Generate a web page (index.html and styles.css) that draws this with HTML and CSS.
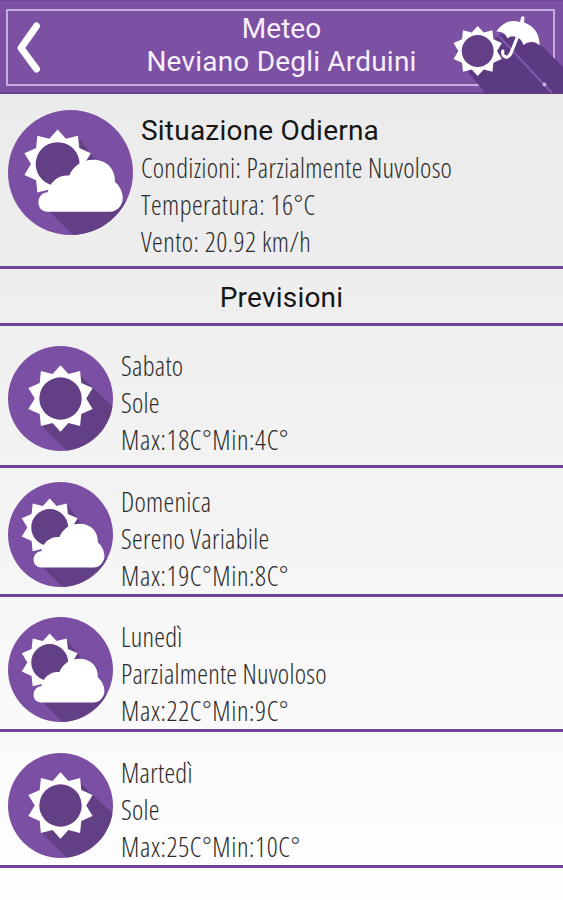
FILE: index.html
```html
<!DOCTYPE html>
<html lang="it">
<head>
<meta charset="utf-8">
<title>Meteo</title>
<link rel="stylesheet" href="styles.css">
</head>
<body>
<svg class="defs" aria-hidden="true">
  <defs>
    <clipPath id="disc"><circle r="52"/></clipPath>
    <g id="sun">
      <polygon class="white" points="0,-33 7.9,-24.3 19.4,-27.2 20.6,-15.4 31.8,-10.4 25.5,0 31.8,10.4 20.6,15.4 19.4,27.2 7.9,24.3 0,33 -7.9,24.3 -19.4,27.2 -20.6,15.4 -31.8,10.4 -25.5,0 -31.8,-10.4 -20.6,-15.4 -19.4,-27.2 -7.9,-24.3"/>
      <circle class="shade" r="21"/>
    </g>
    <g id="sunny">
      <circle class="base" r="52"/>
      <polygon class="shade" clip-path="url(#disc)" points="20,-22 72,27 60,80 35,80 -20,26"/>
      <use href="#sun"/>
    </g>
    <g id="cloudy">
      <circle class="base" r="52"/>
      <g clip-path="url(#disc)">
        <polygon class="shade" points="-20,30 6,56 60,56 60,13 40,28"/>
        <polygon class="shade" points="7,-29 22,-9 10,-4"/>
      </g>
      <use href="#sun" transform="translate(-10.7 -7) scale(.87)"/>
      <path class="white" d="M-19 32.7C-24 32.7-26.7 29-26.7 24.8C-26.7 19.500-22.500 16.500-19 16.500C-17.500 8-10 1.500-1 2.500C2-5 9-10.700 19-10.700C30-10.700 37.500-3 37 8C41 11 43.500 17 43.500 21C43.500 28 38 32.700 33 32.700Z"/>
    </g>
  </defs>
</svg>

<header class="header">
  <div class="frame">
    <svg class="back" viewBox="0 0 24 52"><path d="M19.500 5L4 27L19.500 48"/></svg>
    <h1 class="heading"><span class="meteo">Meteo</span><span class="place">Neviano Degli Arduini</span></h1>
  </div>
  <svg class="badge" viewBox="0 0 123 94">
    <polygon class="badge-shade" points="28,72 46,94 123,94 123,67 98,42 60,34"/>
    <path class="ray" d="M56 33L112 93"/>
    <circle cx="104.500" cy="84.500" r="2" class="glint"/>
    <use href="#sun" transform="translate(37.700 51) scale(.76)"/>
    <path class="white" d="M56.300 31.500C63 22 72 19 80 22L81 17.500Q82.500 15.500 84.500 17L84 22.500C94 26 100 34 99.500 45.500Q96 41.500 91 42Q87 42 83.500 45Q81 38 76 37Q71 35 67.500 38.500Q65 31 56.300 31.500Z"/>
    <path class="handle" d="M77 38L71 53Q68.500 58.500 64.500 56.500Q62 55 62.800 51"/>
  </svg>
</header>

<main>
  <section class="today">
    <svg class="icon-lg" viewBox="-52 -52 104 104"><use href="#cloudy"/></svg>
    <div>
      <h2 class="title t-today">Situazione Odierna</h2>
      <p class="line">Condizioni: Parzialmente Nuvoloso</p>
      <p class="line reading">Temperatura: 16°C</p>
      <p class="line reading">Vento: 20.92 km/h</p>
    </div>
  </section>
  <h2 class="title forecast-title">Previsioni</h2>
  <section class="day first">
    <svg class="icon" viewBox="-52 -52 104 104"><use href="#sunny"/></svg>
    <div>
      <p class="line">Sabato</p>
      <p class="line">Sole</p>
      <p class="line range">Max:18C°Min:4C°</p>
    </div>
  </section>
  <section class="day second">
    <svg class="icon" viewBox="-52 -52 104 104"><use href="#cloudy"/></svg>
    <div>
      <p class="line">Domenica</p>
      <p class="line">Sereno Variabile</p>
      <p class="line range">Max:19C°Min:8C°</p>
    </div>
  </section>
  <section class="day third">
    <svg class="icon" viewBox="-52 -52 104 104"><use href="#cloudy"/></svg>
    <div>
      <p class="line">Lunedì</p>
      <p class="line">Parzialmente Nuvoloso</p>
      <p class="line range">Max:22C°Min:9C°</p>
    </div>
  </section>
  <section class="day fourth">
    <svg class="icon" viewBox="-52 -52 104 104"><use href="#sunny"/></svg>
    <div>
      <p class="line">Martedì</p>
      <p class="line">Sole</p>
      <p class="line range">Max:25C°Min:10C°</p>
    </div>
  </section>
</main>
</body>
</html>
```
FILE: styles.css
```css
* { box-sizing: border-box; margin: 0; padding: 0; }
body {
  width: 563px;
  height: 900px;
  overflow: hidden;
  background: linear-gradient(#ebebeb 94px, #efefef 330px, #fefefe 880px);
  font-family: "Open Sans", sans-serif;
  color: #2b2b2b;
}
.defs { position: absolute; width: 0; height: 0; }
.white { fill: #fff; }
.base { fill: #7b4fa3; }
.shade { fill: #634085; }

.header {
  position: relative;
  height: 94px;
  padding: 8px 8px 7px 6px;
  background: #7c51a3;
  border-top: 1px solid #71479a;
  border-bottom: 2px solid #6c3c93;
}
.frame {
  position: relative;
  height: 77px;
  border: 2px solid #c8aee0;
}
.back {
  position: absolute;
  left: 9px;
  top: 10px;
  width: 24px;
  height: 52px;
  fill: none;
  stroke: #fff;
  stroke-width: 7;
  stroke-linecap: round;
  stroke-linejoin: round;
}
.heading {
  font: 400 28px/33px Roboto, sans-serif;
  color: #f8efff;
  text-align: center;
  padding: 1px 0 0 2px;
}
.heading span { display: block; }
.place { letter-spacing: .2px; }
.badge { position: absolute; right: 0; top: -1px; width: 123px; height: 94px; }
.badge-shade { fill: #5b3a82; }
.badge .shade { fill: #5f3d88; }
.ray { stroke: #8058ae; stroke-width: 2; }
.glint { fill: #c8aee0; }
.handle { fill: none; stroke: #fff; stroke-width: 3.200; stroke-linecap: round; }

.today, .day { display: flex; align-items: flex-start; padding-left: 8px; border-bottom: 3px solid #71449c; }
.today { height: 175px; padding-top: 16px; gap: 8px; }
.icon-lg { width: 125px; height: 125px; flex: none; }
.icon { width: 105px; height: 105px; flex: none; }
.title { font: 400 28px/37px Roboto, sans-serif; color: #161616; letter-spacing: .22px; }
.t-today { margin-top: 2px; }
.line {
  font-size: 27px;
  line-height: 37px;
  font-weight: 320;
  font-stretch: 75%;
  letter-spacing: .27px;
  white-space: nowrap;
}
.reading { letter-spacing: .45px; }
.range { letter-spacing: .62px; }
.forecast-title { height: 57px; padding-top: 10px; text-align: center; border-bottom: 3px solid #71449c; }
.day { gap: 8px; }
.day > div { padding-top: 1px; }
.first { height: 142px; padding-top: 20px; }
.second { height: 129px; padding-top: 14px; }
.third { height: 135px; padding-top: 20px; }
.fourth { height: 136px; padding-top: 21px; }
```
